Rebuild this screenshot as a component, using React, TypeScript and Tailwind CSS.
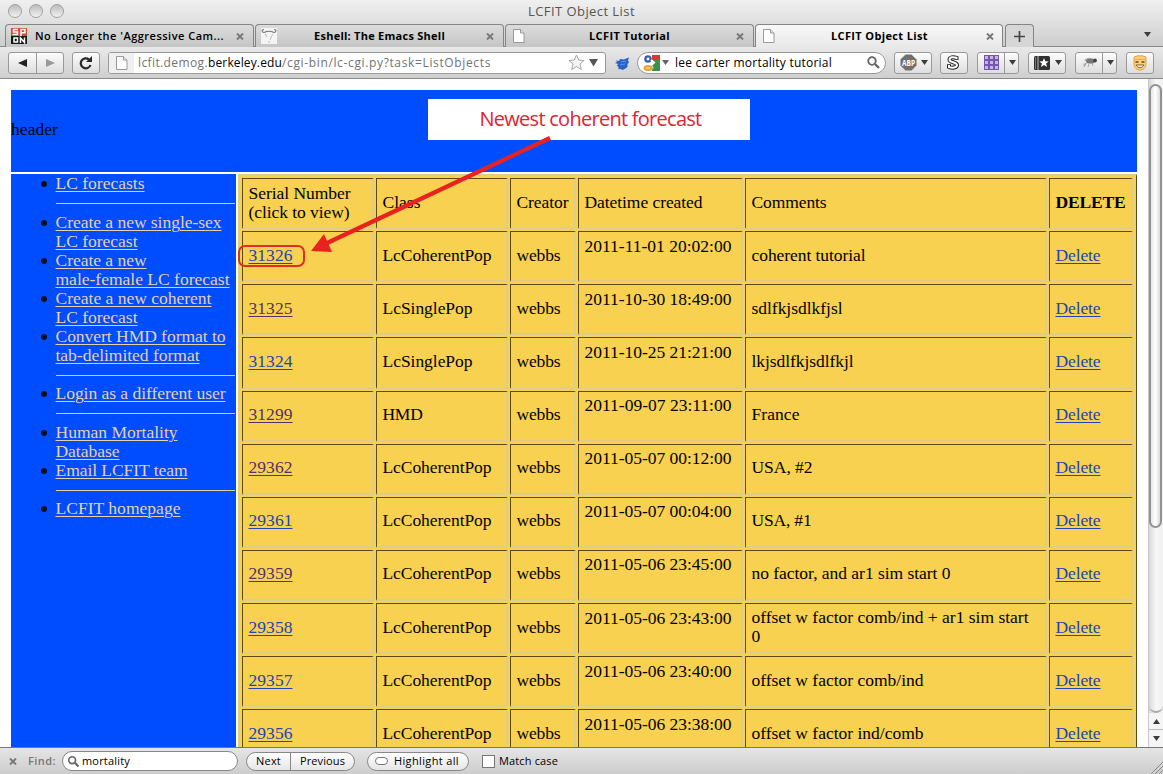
import React from "react";

const rows: [string, string, string, [string, number][], boolean][] = [
  ["31326", "LcCoherentPop", "2011-11-01 20:02:00", [["coherent tutorial", 114]], false],
  ["31325", "LcSinglePop", "2011-10-30 18:49:00", [["sdlfkjsdlkfjsl", 91]], true],
  ["31324", "LcSinglePop", "2011-10-25 21:21:00", [["lkjsdlfkjsdlfkjl", 102]], false],
  ["31299", "HMD", "2011-09-07 23:11:00", [["France", 48]], true],
  ["29362", "LcCoherentPop", "2011-05-07 00:12:00", [["USA, #2", 61]], true],
  ["29361", "LcCoherentPop", "2011-05-07 00:04:00", [["USA, #1", 60]], false],
  ["29359", "LcCoherentPop", "2011-05-06 23:45:00", [["no factor, and ar1 sim start 0", 199]], true],
  ["29358", "LcCoherentPop", "2011-05-06 23:43:00", [["offset w factor comb/ind + ar1 sim start", 277], ["0", 9]], false],
  ["29357", "LcCoherentPop", "2011-05-06 23:40:00", [["offset w factor comb/ind", 172]], false],
  ["29356", "LcCoherentPop", "2011-05-06 23:38:00", [["offset w factor ind/comb", 172]], false],
];

/* Single line of text tracked out or in to an exact width. */
function Fit({ w, children, className = "", size }: { w: number; children: string; className?: string; size?: number }) {
  const ref = React.useRef<HTMLSpanElement>(null);
  React.useLayoutEffect(() => {
    const el = ref.current;
    if (!el) return;
    el.style.letterSpacing = "0px";
    const natural = el.getBoundingClientRect().width;
    el.style.letterSpacing = `${(w - natural) / children.length}px`;
  }, [w, children]);
  return (
    <span ref={ref} className={`inline-block whitespace-nowrap ${className}`} style={size ? { fontSize: size } : undefined}>
      {children}
    </span>
  );
}

function Page() {
  return (
    <svg className="h-4 w-3.5 shrink-0" viewBox="0 0 14 16">
      <path d="M1.5 1.500h7l3.500 3.500v9.500h-10.500z" fill="#fdfdfd" stroke="#999" />
      <path d="M8.500 1.500v3.500h3.500" fill="#e4e4e4" stroke="#999" />
    </svg>
  );
}

function Cross() {
  return (
    <svg className="h-[7px] w-[8px] shrink-0" viewBox="0 0 8 7">
      <path d="M1 .5 7 6.500M7 .5 1 6.500" stroke="#777" strokeWidth="1.9" />
    </svg>
  );
}

function Down({ className = "" }: { className?: string }) {
  return (
    <svg className={`h-[5px] w-[7px] shrink-0 ${className}`} viewBox="0 0 7 5">
      <path d="M0 0h7L3.500 5z" fill="#3c3c3c" />
    </svg>
  );
}

function Magnifier({ className = "" }: { className?: string }) {
  return (
    <svg className={`h-[13px] w-[13px] shrink-0 ${className}`} viewBox="0 0 13 13">
      <circle cx="5" cy="5" r="3.800" fill="none" stroke="#666" strokeWidth="1.800" />
      <path d="m8 8 4 4" stroke="#666" strokeWidth="2.400" />
    </svg>
  );
}

const button = "flex h-[22px] shrink-0 items-center rounded-[3px] border border-[#999] bg-gradient-to-b from-[#fcfcfc] to-[#dedede]";
const tab = "flex h-[23px] shrink-0 items-center rounded-t-[4px] border border-b-0 border-[#858585]";

function Cell({ children, className = "pb-[2px]" }: { children?: React.ReactNode; className?: string }) {
  return (
    <div className={`flex items-center overflow-hidden border-t border-l border-r-2 border-b-2 border-t-[#5a4b16] border-l-[#5a4b16] border-r-[#dfcd8e] border-b-[#dfcd8e] pl-[5.500px] leading-[19px] ${className}`}>
      {children}
    </div>
  );
}

const grid = "grid h-[53.130px] shrink-0 grid-cols-[132px_132px_66px_165px_302px_84px] gap-x-[2px] pb-[2px]";

function SideLink({ lines }: { lines: [string, number][] }) {
  return (
    <li className="relative">
      <span className="absolute top-[7px] -left-[15px] h-[6px] w-[6px] rounded-full bg-[#081020]" />
      {lines.map(([text, w]) => (
        <a key={text} className="block h-[19px] leading-[19px]">
          <Fit w={w} className="underline decoration-1 underline-offset-2">{text}</Fit>
        </a>
      ))}
    </li>
  );
}

function Rule() {
  return <li className="mt-[10px] mr-px mb-[8.500px] h-px bg-[#dfcd9c]" />;
}

export default function App() {
  return (
    <div className="relative flex h-[774px] w-[1163px] flex-col overflow-hidden bg-white font-['Lucida_Grande','Open_Sans',sans-serif] text-[12px] text-black">
      <header className="shrink-0">
        <div className="bg-gradient-to-b from-[#f0f0f0] to-[#cdcdcd]">
          <div className="grid h-6 grid-cols-[1fr_auto_1fr] items-center">
            <div className="flex gap-[7px] pb-[2px] pl-2">
              {[0, 1, 2].map((i) => (
                <span key={i} className="h-[14px] w-[14px] rounded-full border border-[#a0a0a0] bg-gradient-to-b from-[#bcbcbc] to-[#f2f2f2]" />
              ))}
            </div>
            <Fit w={107} size={13} className="text-[#555]">LCFIT Object List</Fit>
          </div>
          <div className="flex h-[23px] border-b border-[#888] pl-[5px] text-[11px] font-bold">
            <div className={`${tab} w-[249px] bg-gradient-to-b from-[#dcdcdc] to-[#c5c5c5] pl-[5px]`}>
              <svg className="h-4 w-4 shrink-0" viewBox="0 0 16 16">
                <path fill="#d0493c" d="M0 0h16v8H0z" />
                <path fill="#161616" d="M0 8h16v8H0z" />
                <path d="M7 1.500H2.500V4H6.500v2.500H1.500M10 8V1.500H14V4.700h-4M3 10h3.500v4H3zM9.500 15v-5l4 4.500v-5" fill="none" stroke="#fff" strokeWidth="1.500" />
              </svg>
              <Fit w={189} className="ml-[8px] font-semibold">No Longer the 'Aggressive Cam...</Fit>
              <span className="ml-[12px] flex"><Cross /></span>
            </div>
            <div className={`${tab} ml-[1px] w-[249px] bg-gradient-to-b from-[#dcdcdc] to-[#c5c5c5] pl-[5px]`}>
              <svg className="h-4 w-4 shrink-0" viewBox="0 0 16 16">
                <path fill="#f4f4f4" d="M0 0h16v16H0z" />
                <path d="M3 1.500c-3 0-2 3 0 3s2-2 5-1c3-1 3 1 5 1s3-3 0-3" fill="none" stroke="#777" strokeWidth="1.200" />
                <path d="M4 6l2 3M12 6l-2 3-1 3M7 14h2" fill="none" stroke="#bbb" />
              </svg>
              <Fit w={131} className="ml-[37px]">Eshell: The Emacs Shell</Fit>
              <span className="ml-[41px] flex"><Cross /></span>
            </div>
            <div className={`${tab} ml-[1px] w-[249px] bg-gradient-to-b from-[#dcdcdc] to-[#c5c5c5] pl-[6px]`}>
              <Page />
              <Fit w={81} className="ml-[63px]">LCFIT Tutorial</Fit>
              <span className="ml-[66px] flex"><Cross /></span>
            </div>
            <div className={`${tab} ml-[1px] w-[248px] bg-gradient-to-b from-[#f8f8f8] to-[#e9e9e9] pl-[6px]`}>
              <Page />
              <Fit w={97} className="ml-[55px]">LCFIT Object List</Fit>
              <span className="ml-[58px] flex"><Cross /></span>
            </div>
            <div className={`${tab} ml-[2px] w-[29px] justify-center bg-[#d6d6d6]`}>
              <svg className="h-[11px] w-[11px]" viewBox="0 0 11 11"><path d="M5.500 0v11M0 5.500h11" stroke="#444" strokeWidth="1.700" /></svg>
            </div>
            <Down className="mt-[8px] ml-[110px]" />
          </div>
        </div>
        <div className="flex h-[32px] items-center border-b border-[#8b8b8b] bg-gradient-to-b from-[#e9e9e9] to-[#cfcfcf] pl-[8px]">
          <div className={`${button} w-[56px]`}>
            <span className="flex h-full w-[28px] items-center justify-center border-r border-[#999]">
              <svg className="h-[8px] w-[9px]" viewBox="0 0 9 8"><path d="M9 0v8L0 4z" fill="#222" /></svg>
            </span>
            <span className="flex flex-1 justify-center">
              <svg className="h-[8px] w-[9px]" viewBox="0 0 9 8"><path d="M0 0v8l9-4z" fill="#999" /></svg>
            </span>
          </div>
          <div className={`${button} ml-[8px] w-[28px] justify-center`}>
            <svg className="h-[14px] w-[14px]" viewBox="0 0 14 14">
              <path d="M10 3.500A5 5 0 1 0 11.500 9" fill="none" stroke="#292929" strokeWidth="2.200" />
              <path d="M13 0v6H7z" fill="#292929" />
            </svg>
          </div>
          <div className="ml-[8px] flex h-[22px] w-[498px] shrink-0 items-center overflow-hidden rounded-[3px] border border-[#999] bg-white">
            <span className="flex h-full w-[25px] items-center justify-center bg-[#f0f0f0]"><Page /></span>
            <span className="mt-px ml-[4px] flex text-[12px] text-[#737373]">
              <Fit w={70}>lcfit.demog.</Fit>
              <Fit w={74} className="text-black">berkeley.edu</Fit>
              <Fit w={209}>/cgi-bin/lc-cgi.py?task=ListObjects</Fit>
            </span>
            <svg className="ml-[77px] h-[17px] w-[17px]" viewBox="0 0 17 17">
              <path d="m8.500 1 2.200 5 5.300.5-4 3.600 1.300 5.400-4.800-2.900-4.800 2.900 1.300-5.400-4-3.600 5.300-.5z" fill="#f4f4f4" stroke="#a5a5a5" />
            </svg>
            <svg className="ml-[4px] h-[8px] w-[9px]" viewBox="0 0 9 8"><path d="M0 0h9L4.500 7.500z" fill="#555" /></svg>
          </div>
          <svg className="ml-[9px] h-[14px] w-[15px] shrink-0" viewBox="0 0 15 14">
            <path d="M1 4.500 4 5l1-2 4 .5 2-1 3-1-1 3 1 2-1.500 1.500v3l-2 1.500-3 1.500-2-1-2 .2v-2L2 9.500l1-1.500-3-1 2-1z" fill="#2b62c9" />
            <path d="M6 6l5-1M5 9l5-1" stroke="#5b93e8" />
          </svg>
          <div className="ml-[7px] flex h-[22px] w-[249px] shrink-0 items-center rounded-full border border-[#999] bg-white pl-[5px]">
            <svg className="h-[16px] w-[17px] shrink-0" viewBox="0 0 17 16">
              <path d="M9 0h8v5H9z" fill="#d83a31" /><path d="M9 5h8v11H9z" fill="#389348" />
              <path d="M0 0h9v9H0z" fill="#fff" />
              <circle cx="5" cy="4" r="2.600" fill="none" stroke="#3563b0" strokeWidth="2.400" />
              <path d="m8 5 3 2.500-3 3 2 3" fill="none" stroke="#fff" strokeWidth="2" />
              <ellipse cx="5.200" cy="13" rx="3.600" ry="2" fill="#f8d58a" stroke="#e4a22f" strokeWidth="2" />
            </svg>
            <Down className="ml-[2px] opacity-80" />
            <Fit w={157} className="mt-px ml-[6px]">lee carter mortality tutorial</Fit>
            <Magnifier className="ml-[35px]" />
          </div>
          <div className={`${button} ml-[8px] w-[38px] pl-[5px]`}>
            <svg className="h-[17px] w-[17px] shrink-0" viewBox="0 0 17 17">
              <path d="M5.500.5h6l5 5v6l-5 5h-6l-5-5v-6z" fill="#707070" />
              <text x="8.500" y="11.500" textAnchor="middle" textLength="13" lengthAdjust="spacingAndGlyphs" fontSize="8" fontWeight="bold" fill="#fff">ABP</text>
            </svg>
            <Down className="ml-[4px]" />
          </div>
          <div className={`${button} ml-[8px] w-[28px] justify-center pr-[2px]`}>
            <svg className="h-[15px] w-[14px]" viewBox="0 0 14 15">
              <path d="M10.500 5V2.800C7 1.500 3.500 2.200 3.500 4.800 3.500 7.500 11 7 11 10c0 3-5 3.200-8 2V9.300" fill="none" stroke="#222" strokeWidth="4" />
              <path d="M10.500 4.200V2.800C7 1.500 3.500 2.200 3.500 4.800 3.500 7.500 11 7 11 10c0 3-5 3.200-8 2V10" fill="none" stroke="#fff" strokeWidth="2" />
            </svg>
          </div>
          <div className={`${button} ml-[9px] w-[42px]`}>
            <span className="flex h-full w-[27px] shrink-0 items-center justify-center border-r border-[#999]">
              <span className="grid grid-cols-3">
                {Array.from({ length: 9 }, (_, i) => <span key={i} className="h-[5px] w-[5px] border border-[#7557ad] bg-[#c5b8de]" />)}
              </span>
            </span>
            <Down className="ml-[4px]" />
          </div>
          <div className={`${button} ml-[9px] w-[38px] pl-[5px]`}>
            <svg className="h-[14px] w-[16px]" viewBox="0 0 16 14">
              <rect width="16" height="14" rx="1.500" fill="#303030" /><path d="M1 1h1v12H1zM3 0h2v14H3z" fill="#777" />
              <path d="m10 2 1.300 3.200 3.400.2-2.600 2.100.9 3.400-3-1.900-3 1.900.9-3.400-2.600-2.100 3.400-.2z" fill="#fff" />
            </svg>
            <Down className="ml-[5px]" />
          </div>
          <div className={`${button} ml-[9px] w-[42px]`}>
            <span className="flex h-full w-[27px] shrink-0 items-center justify-center border-r border-[#999]">
              <svg className="h-[13px] w-[17px]" viewBox="0 0 17 13">
                <path d="M3 4.500C5 1 9 1 12 3L7 6zM2 8l5-2-4 5z" fill="#bbb" />
                <path d="M5 7 3 11M8 8l-1 3M11 7l1 3" stroke="#999" strokeWidth=".8" />
                <ellipse cx="9.500" cy="5" rx="4.500" ry="2.600" fill="#777" /><circle cx="14" cy="4.500" r="1.900" fill="#444" />
              </svg>
            </span>
            <Down className="ml-[4px]" />
          </div>
          <div className={`${button} ml-[9px] w-[28px] justify-center`}>
            <svg className="h-[16px] w-[16px]" viewBox="0 0 16 16">
              <path d="M2 3Q2 1 4 1.500 6 0 8 1q2-1 4 .5Q14 1 14 3v6c0 8-12 8-12 0z" fill="#fbd17a" stroke="#e2a044" />
              <path d="M2.500 4.500h11" stroke="#e9ab4c" />
              <path d="M3.500 7h3M9.500 7h3" stroke="#684018" strokeWidth="1.300" />
              <path d="M4 10c2 3.500 6 3.500 8 0z" fill="#fff" stroke="#684018" strokeWidth=".8" />
            </svg>
          </div>
        </div>
      </header>

      <div className="flex min-h-0 flex-1">
        <main className="flex w-[1148px] flex-col overflow-hidden bg-white pt-[11px] pl-[11px] font-['Liberation_Serif',serif] text-[17.500px]">
          <div className="flex h-[82px] w-[1126px] shrink-0 items-center bg-[#004dff] pb-[3px]"><Fit w={47}>header</Fit></div>
          <div className="mt-[2px] flex min-h-0 w-[1126px] flex-1">
            <nav className="w-[225px] shrink-0 bg-[#004dff] pl-[44.500px] text-[#e7d0a3]">
              <ul className="flex flex-col">
                <SideLink lines={[["LC forecasts", 89]]} />
                <Rule />
                <SideLink lines={[["Create a new single-sex", 166], ["LC forecast", 82]]} />
                <SideLink lines={[["Create a new", 91], ["male-female LC forecast", 174]]} />
                <SideLink lines={[["Create a new coherent", 156], ["LC forecast", 82]]} />
                <SideLink lines={[["Convert HMD format to", 170], ["tab-delimited format", 144]]} />
                <Rule />
                <SideLink lines={[["Login as a different user", 170]]} />
                <Rule />
                <SideLink lines={[["Human Mortality", 122], ["Database", 64]]} />
                <SideLink lines={[["Email LCFIT team", 132]]} />
                <Rule />
                <SideLink lines={[["LCFIT homepage", 125]]} />
              </ul>
            </nav>
            <div className="ml-[2px] flex w-[899px] shrink-0 flex-col overflow-hidden border-t-2 border-r border-l-2 border-t-[#dfcd8e] border-r-[#5a4b16] border-l-[#dfcd8e] bg-[#f7d14f] pt-[2px] pl-[2px]">
              <div className={grid}>
                <Cell className=""><span><Fit w={102}>Serial Number</Fit><br /><Fit w={101}>(click to view)</Fit></span></Cell>
                <Cell><Fit w={38}>Class</Fit></Cell>
                <Cell><Fit w={52}>Creator</Fit></Cell>
                <Cell><Fit w={118}>Datetime created</Fit></Cell>
                <Cell><Fit w={75}>Comments</Fit></Cell>
                <Cell><Fit w={70} className="font-bold">DELETE</Fit></Cell>
              </div>
              {rows.map(([id, kind, date, comment, visited]) => (
                <div key={id} className={grid}>
                  <Cell><Fit w={44} className={`underline decoration-1 underline-offset-2 ${visited ? "text-[#553269]" : "text-[#2145b2]"}`}>{id}</Fit></Cell>
                  <Cell><Fit w={kind === "HMD" ? 40 : kind === "LcSinglePop" ? 90 : 109}>{kind}</Fit></Cell>
                  <Cell><Fit w={44}>webbs</Fit></Cell>
                  <Cell className="pb-[20px]"><Fit w={147}>{date}</Fit></Cell>
                  <Cell>
                    <div className="flex flex-col items-start">
                      {comment.map(([text, w]) => <Fit key={text} w={w}>{text}</Fit>)}
                    </div>
                  </Cell>
                  <Cell><Fit w={45} className="text-[#2145b2] underline decoration-1 underline-offset-2">Delete</Fit></Cell>
                </div>
              ))}
            </div>
          </div>
        </main>
        <aside className="flex w-[15px] flex-col border-l border-[#c9c9c9] bg-gradient-to-r from-[#d8d8d8] via-[#f7f7f7] to-[#f0f0f0]">
          <div className="mt-[5px] h-[444px] w-[13px] shrink-0 rounded-full border-2 border-[#929292] bg-gradient-to-r from-[#e7e7e7] via-white to-[#dadada]" />
          <div className="mt-auto h-3 rounded-b-full border-b-2 border-[#aaa]" />
          <div className="flex h-[34px] flex-col items-center bg-[#f5f5f5]">
            <span className="flex h-[17px] w-full items-center justify-center border-b border-[#bbb]"><Down className="rotate-180" /></span>
            <span className="flex flex-1 items-center"><Down /></span>
          </div>
        </aside>
      </div>

      <footer className="relative flex h-[27px] shrink-0 items-center border-t border-[#777] bg-gradient-to-b from-[#e5e5e5] to-[#cdcdcd] pl-[9px] text-[11px]">
        <Cross />
        <Fit w={28} className="mt-px ml-[11px] font-semibold text-[#777]">Find:</Fit>
        <div className="ml-[6px] flex h-[20px] w-[176px] items-center rounded-full border border-[#888] bg-white pl-[4px]">
          <Magnifier className="scale-90" />
          <Fit w={48} className="mt-px ml-[2px]">mortality</Fit>
        </div>
        <div className="ml-[8px] flex h-[19px] w-[109px] items-center rounded-full border border-[#888] bg-gradient-to-b from-white to-[#e5e5e5]">
          <span className="flex h-full w-[44px] items-center justify-center border-r border-[#888]"><Fit w={25}>Next</Fit></span>
          <span className="flex flex-1 justify-center"><Fit w={45}>Previous</Fit></span>
        </div>
        <div className="ml-[12px] flex h-[19px] w-[102px] items-center rounded-full border border-[#888] bg-gradient-to-b from-white to-[#e5e5e5] pl-[7px]">
          <span className="h-[8px] w-[13px] rounded-full border border-[#777] bg-white" />
          <Fit w={65} className="ml-[6px]">Highlight all</Fit>
        </div>
        <span className="ml-[13px] h-[13px] w-[13px] border border-[#777] bg-white" />
        <Fit w={59} className="mt-px ml-[4px]">Match case</Fit>
        <svg className="absolute right-0 bottom-0 h-3 w-3" viewBox="0 0 12 12"><path d="M0 12 12 0M4 12l8-8M8 12l4-4" stroke="#888" /></svg>
      </footer>

      <div className="absolute top-[99px] left-[428px] flex h-[41px] w-[322px] justify-center bg-white pt-[6px] pl-[3px] font-['Open_Sans',sans-serif] text-[20px] leading-[28px] text-[#db2532]">
        <Fit w={222}>Newest coherent forecast</Fit>
      </div>
      <div className="absolute top-[245px] left-[238px] h-[22px] w-[67px] rounded-[7px] border-2 border-[#dc3022]" />
      <svg className="absolute top-[136px] left-[310px] h-[120px] w-[245px]" viewBox="0 0 245 120">
        <path d="M240 2 15 108" stroke="#e8221e" strokeWidth="4.200" />
        <path d="M1 115 14 98 22 116z" fill="#e8221e" />
      </svg>
    </div>
  );
}
